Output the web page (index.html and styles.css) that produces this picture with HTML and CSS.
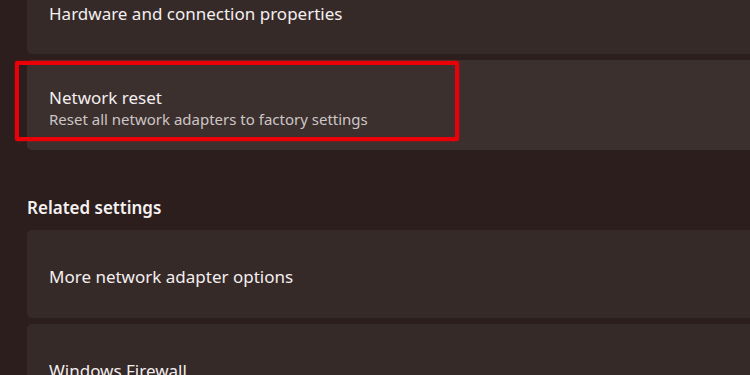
FILE: index.html
```html
<!DOCTYPE html>
<html lang="en">
<head>
<meta charset="utf-8">
<title>Network settings</title>
<link rel="stylesheet" href="styles.css">
</head>
<body>
<main class="page">
  <section class="group top-group">
    <div class="card">
      <span class="title">Hardware and connection properties</span>
    </div>
    <div class="card card-hi highlighted">
      <span class="title">Network reset</span>
      <span class="subtitle">Reset all network adapters to factory settings</span>
      <div class="callout"></div>
    </div>
  </section>
  <h2 class="section-title">Related settings</h2>
  <section class="group">
    <div class="card">
      <span class="title">More network adapter options</span>
    </div>
    <div class="card">
      <span class="title">Windows Firewall</span>
    </div>
  </section>
</main>
</body>
</html>
```
FILE: styles.css
```css
html, body {
  margin: 0;
  padding: 0;
  background: #2c1e1c;
  overflow: hidden;
}
body {
  width: 750px;
  height: 375px;
  font-family: "Noto Sans", "Open Sans", sans-serif;
  color: #f2eeee;
}
.page {
  padding-left: 27px;
  display: flex;
  flex-direction: column;
}
.group {
  display: flex;
  flex-direction: column;
  gap: 6px;
}
.top-group {
  margin-top: -34px;
}
.card {
  position: relative;
  height: 88px;
  width: 760px;
  box-sizing: border-box;
  padding-left: 22px;
  padding-top: 5px;
  border-radius: 5px;
  background: #362a29;
  display: flex;
  flex-direction: column;
  justify-content: center;
}
.top-group .card:first-child {
  padding-top: 7px;
}
.card-hi {
  height: 90px;
  background: #3c302f;
}
.title {
  font-size: 17px;
  line-height: 22px;
  color: #f3efef;
}
.subtitle {
  font-size: 15px;
  line-height: 20px;
  color: #cdc6c5;
}
.callout {
  position: absolute;
  left: -12px;
  top: 1px;
  width: 444px;
  height: 80px;
  box-sizing: border-box;
  border: 4px solid #ec0008;
  border-radius: 2px;
  box-shadow: 0 0 2px rgba(236, 0, 8, 0.7);
}
.section-title {
  margin: 0;
  height: 80px;
  box-sizing: border-box;
  padding-bottom: 11px;
  display: flex;
  align-items: flex-end;
  font-size: 17px;
  line-height: 22px;
  font-weight: 600;
  color: #f5f1f1;
}
```
